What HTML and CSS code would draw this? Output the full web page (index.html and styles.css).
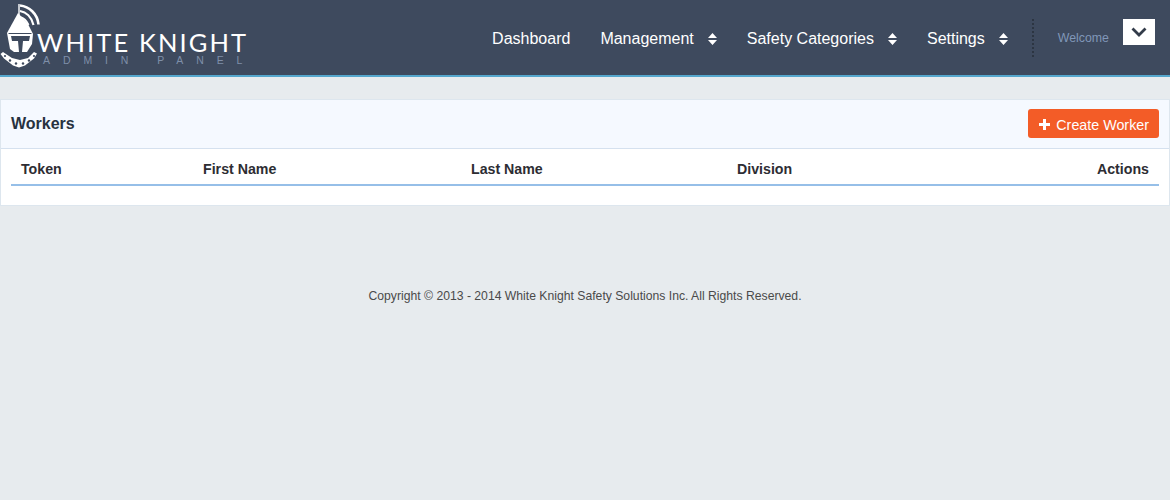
FILE: index.html
```html
<!DOCTYPE html>
<html lang="en">
<head>
<meta charset="utf-8">
<title>Workers</title>
<link rel="stylesheet" href="styles.css">
</head>
<body>
<header class="topbar">
  <a class="logo" href="#">
    <svg class="logo-mark" width="40" height="72" viewBox="0 0 40 72">
      <g fill="none" stroke="#fff">
        <path d="M19 4v19" stroke-width="1.400"/>
        <path d="M20 5.500c9 1 17.500 8 18.500 19" stroke-width="2.600"/>
        <path d="M20 11c6 1 11.500 6 13.500 14" stroke-width="2.200"/>
        <path d="M20 17c3.500 1 6.500 3.500 8.500 8" stroke-width="2"/>
        <path d="M20 23l10 8" stroke-width="1"/>
      </g>
      <path d="M18 13l10 11 5 10 -1 10 -5 8H14l-4-3 -3-16z" fill="#fff"/>
      <path d="M8.500 33.500l23 0" stroke="#3e4a5e" stroke-width="1"/>
      <path d="M11 36h19l-1 5h-6l-1 11h-3l-1-11h-6z" fill="#3e4a5e"/>
      <path d="M0.500 54l2.500-2 9 6 8 2 8-2 6-6 3 1.500 -3 5 -9 7 -6 2 -6-2 -9-7z" fill="#fff"/>
      <g fill="#3e4a5e">
        <circle cx="5" cy="56" r="1.100"/><circle cx="10" cy="60.500" r="1.200"/><circle cx="16" cy="63.500" r="1.200"/><circle cx="23" cy="63.500" r="1.200"/><circle cx="29" cy="60.500" r="1.200"/><circle cx="34" cy="56" r="1.100"/>
      </g>
    </svg>
    <span class="logo-text">
      <span class="logo-name">White Knight</span>
      <span class="logo-sub">ADMIN PANEL</span>
    </span>
  </a>
  <nav class="menu">
    <a class="menu-item" href="#">Dashboard</a>
    <a class="menu-item" href="#">Management
      <svg class="updown" width="9" height="12" viewBox="0 0 9 12"><path d="M4.500 0L9 5H0zM0 7h9l-4.500 5z"/></svg>
    </a>
    <a class="menu-item" href="#">Safety Categories
      <svg class="updown" width="9" height="12" viewBox="0 0 9 12"><path d="M4.500 0L9 5H0zM0 7h9l-4.500 5z"/></svg>
    </a>
    <a class="menu-item" href="#">Settings
      <svg class="updown" width="9" height="12" viewBox="0 0 9 12"><path d="M4.500 0L9 5H0zM0 7h9l-4.500 5z"/></svg>
    </a>
  </nav>
  <div class="user">
    <span class="welcome">Welcome</span>
    <button class="user-toggle" type="button" aria-label="Open user menu">
      <svg width="16" height="10" viewBox="0 0 16 10"><path d="M1.500 1.500l6.500 6.500 6.500-6.500" fill="none" stroke="#333c4a" stroke-width="2.800"/></svg>
    </button>
  </div>
</header>

<main class="content">
  <section class="panel">
    <div class="panel-head">
      <h1 class="panel-title">Workers</h1>
      <a class="btn-create" href="#">
        <svg width="11" height="11" viewBox="0 0 11 11"><path d="M4 0h3v4h4v3H7v4H4V7H0V4h4z" fill="#fff"/></svg>
        Create Worker
      </a>
    </div>
    <div class="panel-body">
      <table class="grid">
        <thead>
          <tr>
            <th class="col-token">Token</th>
            <th class="col-first">First Name</th>
            <th class="col-last">Last Name</th>
            <th class="col-division">Division</th>
            <th class="col-actions">Actions</th>
          </tr>
        </thead>
      </table>
    </div>
  </section>
  <footer class="copyright">Copyright © 2013 - 2014 White Knight Safety Solutions Inc. All Rights Reserved.</footer>
</main>
</body>
</html>
```
FILE: styles.css
```css
* { box-sizing: border-box; }
html, body { margin: 0; padding: 0; }
body {
  height: 500px;
  overflow: hidden;
  background: #e7ebee;
  color: #333;
  font-family: "Liberation Sans", Arial, sans-serif;
  font-size: 14px;
}
a { text-decoration: none; }

.topbar {
  display: flex;
  align-items: center;
  height: 77px;
  padding: 0 15px 0 0;
  background: #3e4a5e;
  border-bottom: 2px solid #55a7cd;
}
.logo {
  display: flex;
  align-items: flex-start;
  align-self: flex-start;
  margin-right: auto;
  color: #fff;
}
.logo-mark { display: block; flex: none; }
.logo-text { display: flex; flex-direction: column; margin: 29px 0 0 -3px; }
.logo-name {
  font-family: "Lato", "Liberation Sans", sans-serif;
  font-weight: 400;
  font-size: 25.500px;
  line-height: 26px;
  letter-spacing: 2.100px;
  text-transform: uppercase;
  white-space: nowrap;
}
.logo-sub {
  margin-left: 6px;
  color: #7f8fa9;
  font-size: 10.500px;
  line-height: 11px;
  letter-spacing: 12.900px;
  white-space: nowrap;
}

.menu { display: flex; align-items: center; gap: 30px; padding-top: 2px; }
.menu-item {
  display: flex;
  align-items: center;
  gap: 14px;
  color: #fff;
  font-size: 16px;
  line-height: 20px;
}
.updown { display: block; fill: #fff; }

.user {
  display: flex;
  align-items: center;
  align-self: center;
  height: 38px;
  margin-left: 24px;
  padding-left: 24px;
  border-left: 2px dotted #2c3542;
}
.welcome { color: #8097b8; font-size: 12.350px; margin-right: 14px; }
.user-toggle {
  display: flex;
  align-items: center;
  justify-content: center;
  width: 32px;
  height: 26px;
  margin-bottom: 12px;
  padding: 0;
  border: 0;
  background: #fff;
}

.content { padding-top: 22px; }
.panel {
  height: 107px;
  background: #fff;
  border: 1px solid #dde6ee;
}
.panel-head {
  display: flex;
  align-items: center;
  justify-content: space-between;
  height: 49px;
  padding: 0 10px;
  background: #f5f9ff;
  border-bottom: 1px solid #d5e1ef;
}
.panel-title {
  margin: 0;
  color: #27323f;
  font-size: 16px;
  font-weight: bold;
}
.btn-create {
  display: flex;
  align-items: center;
  gap: 6px;
  height: 29px;
  margin-bottom: 1px;
  padding: 2px 10px 0 11px;
  background: #f35c27;
  border-radius: 3px;
  color: #fff;
  font-size: 14.300px;
}
.panel-body { padding: 0 10px; }
.grid {
  width: 100%;
  table-layout: fixed;
  border-collapse: collapse;
}
.grid th {
  height: 36px;
  padding: 4px 10px 0;
  color: #2d2d33;
  font-size: 14.200px;
  font-weight: bold;
  text-align: left;
  border-bottom: 2px solid #96bfe8;
}
.grid .col-token { width: 182px; }
.grid .col-first { width: 268px; }
.grid .col-last { width: 266px; }
.grid .col-actions { text-align: right; }

.copyright {
  margin-top: 83px;
  color: #4a4a4a;
  font-size: 12.200px;
  line-height: 14px;
  text-align: center;
}
```
